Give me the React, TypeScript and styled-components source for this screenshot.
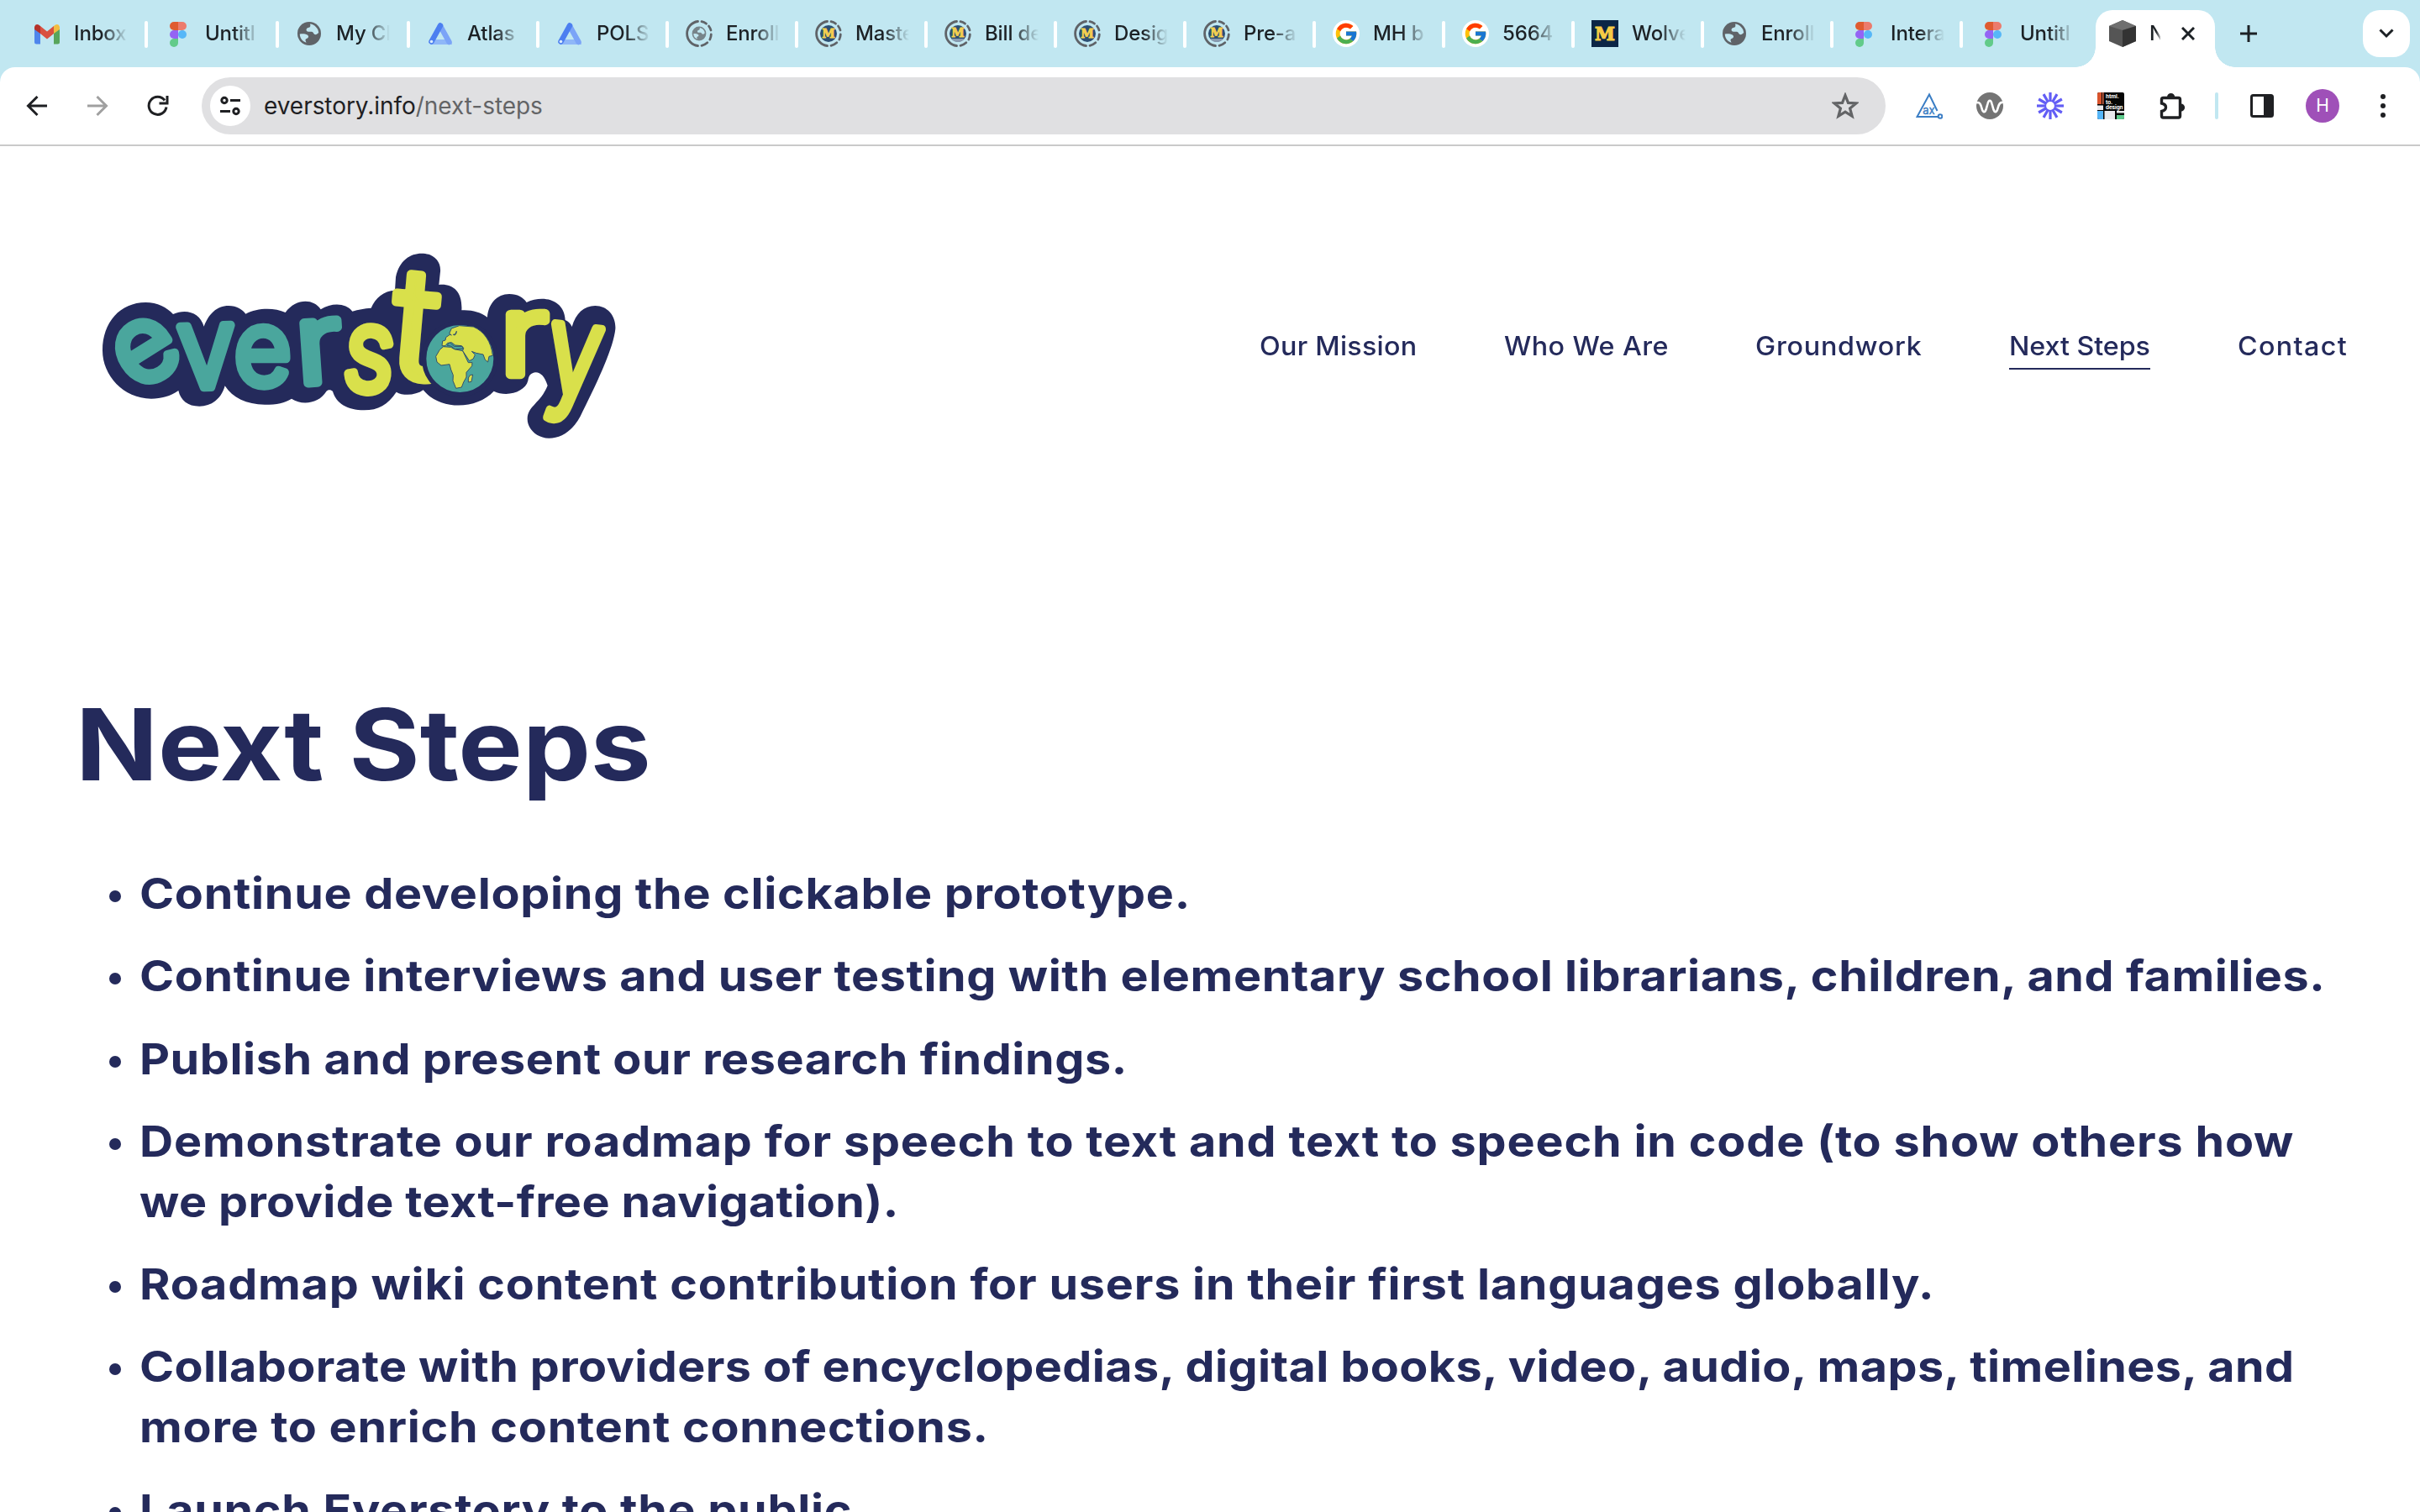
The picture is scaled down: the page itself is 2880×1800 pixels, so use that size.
import React from "react";
import styled, { createGlobalStyle } from "styled-components";
import { FcGoogle } from "react-icons/fc";

const NAVY = "#242a5b";
const TEAL = "#4aa69d";
const LIME = "#d9e04b";

const Global = createGlobalStyle`
  * { box-sizing: border-box; }
  html, body { margin: 0; background: #fff; }
  body { width: 2880px; height: 1800px; overflow: hidden; font-family: Inter, "Liberation Sans", sans-serif; }
`;

const Window = styled.div`
  width: 2880px;
  height: 1800px;
  overflow: hidden;
  display: flex;
  flex-direction: column;
  background: #fff;
`;

/* ---------- tab strip ---------- */

const TabStrip = styled.div`
  height: 80px;
  flex: none;
  display: flex;
  padding-left: 18px;
  background: #c1e7f1;
`;

const Tab = styled.div<{ $w: number; $last?: boolean }>`
  width: ${(p) => p.$w}px;
  height: 80px;
  flex: none;
  display: flex;
  align-items: center;
  padding: 0 0 0 22px;
  position: relative;
  &::after {
    content: "";
    position: absolute;
    right: -2px;
    top: 25px;
    width: 4px;
    height: 32px;
    border-radius: 2px;
    background: ${(p) => (p.$last ? "transparent" : "#fff")};
  }
`;

const Favicon = styled.span`
  width: 32px;
  height: 32px;
  flex: none;
  display: block;
  svg { display: block; }
`;

const TabTitle = styled.span<{ $w: number }>`
  width: ${(p) => p.$w}px;
  margin-left: 16px;
  overflow: hidden;
  white-space: nowrap;
  font-size: 24px;
  line-height: 32px;
  font-weight: 500;
  letter-spacing: -0.15px;
  color: #1c2125;
  mask-image: linear-gradient(to right, #000 calc(100% - 30px), transparent);
`;

const ActiveTab = styled.div`
  width: 142px;
  height: 68px;
  margin: 12px 0 0 6px;
  flex: none;
  display: flex;
  align-items: center;
  padding: 0 0 12px 16px;
  border-radius: 20px 20px 0 0;
  background: #fff;
  position: relative;
  &::before, &::after {
    content: "";
    position: absolute;
    bottom: 0;
    width: 24px;
    height: 24px;
  }
  &::before { right: 100%; background: radial-gradient(circle at 0 0, transparent 23.5px, #fff 24px); }
  &::after { left: 100%; background: radial-gradient(circle at 100% 0, transparent 23.5px, #fff 24px); }
`;

const ActiveTitle = styled.span`
  width: 13px;
  margin: 0 25px 0 16px;
  overflow: hidden;
  font-size: 24px;
  line-height: 32px;
  font-weight: 500;
  color: #1c2125;
  mask-image: linear-gradient(to right, #000 60%, rgba(0, 0, 0, 0.3));
`;

const NewTab = styled.div`
  width: 32px;
  margin-left: 24px;
  height: 80px;
  display: flex;
  align-items: center;
  justify-content: center;
`;

const TabSearch = styled.div`
  width: 56px;
  height: 56px;
  margin: 12px 12px 0 auto;
  border-radius: 20px;
  background: #fff;
  display: flex;
  align-items: center;
  justify-content: center;
`;

/* ---------- toolbar ---------- */

const ToolbarBack = styled.div`
  flex: none;
  background: linear-gradient(#c1e7f1 50%, #fff 50%);
`;

const Toolbar = styled.div`
  height: 94px;
  padding: 12px 0 12px 28px;
  display: flex;
  align-items: flex-start;
  background: #fff;
  border-radius: 18px 18px 0 0;
  border-bottom: 2px solid #cacaca;
`;

const NavIcons = styled.div`
  width: 212px;
  height: 68px;
  display: flex;
  align-items: center;
  gap: 40px;
  svg { display: block; flex: none; }
`;

const Omnibox = styled.div`
  width: 2004px;
  height: 68px;
  flex: none;
  padding: 0 32px 0 10px;
  display: flex;
  align-items: center;
  border-radius: 34px;
  background: #e0e0e2;
`;

const SiteInfo = styled.span`
  width: 48px;
  height: 48px;
  border-radius: 50%;
  background: #fff;
  display: flex;
  align-items: center;
  justify-content: center;
`;

const Url = styled.span`
  flex: 1;
  margin-left: 16px;
  font-size: 28px;
  line-height: 40px;
  letter-spacing: -0.05px;
  color: #1f2023;
  span { color: #636466; }
`;

const Extensions = styled.div`
  height: 68px;
  margin-left: 36px;
  display: flex;
  align-items: center;
  gap: 40px;
  svg { display: block; flex: none; }
`;

const PuzzleSlot = styled.span`
  margin: 0 -2px;
`;

const Divider = styled.span`
  width: 4px;
  height: 32px;
  border-radius: 2px;
  margin: 0 -4px;
  background: #c1e7f1;
`;

const Avatar = styled.span`
  width: 40px;
  height: 40px;
  margin: 0 -4px;
  border-radius: 50%;
  background: #9f50b8;
  color: #fff;
  font-size: 21px;
  line-height: 40px;
  text-align: center;
`;

/* ---------- page ---------- */

const SiteHeader = styled.header`
  height: 476px;
  flex: none;
  display: flex;
  justify-content: space-between;
  padding: 106px 86px 0 100px;
`;

const SiteNav = styled.nav`
  display: flex;
  align-items: flex-start;
  gap: 104px;
  padding-top: 109px;
`;

const NavLink = styled.a<{ $w: number; $ls: number; $active?: boolean }>`
  width: ${(p) => p.$w}px;
  height: 51px;
  font-size: 31px;
  line-height: 46px;
  font-weight: 500;
  letter-spacing: ${(p) => p.$ls}px;
  white-space: nowrap;
  color: ${NAVY};
  border-bottom: 2px solid ${(p) => (p.$active ? NAVY : "transparent")};
`;

const NavLabel = styled.span`
  display: inline-block;
  transform: scaleX(1.04);
  transform-origin: 0 0;
`;

const Main = styled.main`
  padding: 165px 90px 0;
`;

const Title = styled.h1`
  width: max-content;
  margin: 0;
  font-size: 118px;
  line-height: 142px;
  font-weight: 700;
  letter-spacing: -0.1px;
  color: ${NAVY};
  transform: scaleX(1.09);
  transform-origin: 0 0;
`;

const Steps = styled.ul`
  margin: 70px 0 0;
  padding: 0;
  list-style: none;
  display: flex;
  flex-direction: column;
  gap: 26.3px;
`;

const Step = styled.li`
  display: grid;
  grid-template-columns: 76px 1fr;
  color: ${NAVY};
  &::before {
    content: "";
    width: 14px;
    height: 14px;
    margin: 33px 0 0 40px;
    border-radius: 50%;
    background: ${NAVY};
  }
`;

const StepText = styled.div`
  display: flex;
  flex-direction: column;
  align-items: flex-start;
`;

const Line = styled.span<{ $ls: number }>`
  font-size: 51.5px;
  line-height: 72px;
  font-weight: 700;
  white-space: nowrap;
  letter-spacing: ${(p) => p.$ls}px;
  transform: scaleX(1.08);
  transform-origin: 0 0;
`;

/* ---------- favicons ---------- */

const Gmail = () => (
  <svg width="32" height="32" viewBox="0 0 32 32">
    <path d="M1 8v18q0 2.500 2.500 2.500H8V14z" fill="#4f86ec" />
    <path d="M31 8v18q0 2.500-2.500 2.500H24V14z" fill="#58a55c" />
    <path d="M24 7v9l7-5V8q-1-4-5-2.500z" fill="#f2bd42" />
    <path d="M8 7v9l-7-5V8q1-4 5-2.500z" fill="#b5322a" />
    <path d="M8 7l8 6.500L24 7v9l-8 6.500L8 16z" fill="#d95040" />
  </svg>
);

const Figma = () => (
  <svg width="32" height="32" viewBox="0 0 32 32">
    <path d="M16 2h-5a5 5 0 0 0 0 10h5z" fill="#df5b30" />
    <path d="M16 2h5a5 5 0 0 1 0 10h-5z" fill="#ec7b6c" />
    <path d="M16 12h-5a5 5 0 0 0 0 10h5z" fill="#9464f4" />
    <circle cx="21" cy="17" r="5" fill="#56b7f8" />
    <path d="M16 22h-5a5 5 0 1 0 5 5z" fill="#62cb8a" />
  </svg>
);

const GlobeShape = () => (
  <>
    <circle cx="16" cy="16" r="14" fill="#5f6368" />
    <path d="M17 4.500C22 5 27 9.500 27.200 15c-1.500 1.500-3 2.500-4.700 2-1.500-.5-1.500-3-3.500-3.200-2.500-.2-5 .7-6.200-1.300-.8-1.600.7-3.500 2.700-3.700C17 8.600 18 7 17 4.500z" fill="#c1e7f1" />
    <path d="M4.800 16.500c3-.5 6.500-.5 9 1 1.700 1 1.700 3 .2 4-1 .6-2.500.5-2.500 2 0 1.200.5 2 1 3.200C8 25.500 4.800 21.500 4.800 16.500z" fill="#c1e7f1" />
  </>
);

const Globe = () => (
  <svg width="32" height="32" viewBox="0 0 32 32"><GlobeShape /></svg>
);

const Atlas = () => (
  <svg width="32" height="32" viewBox="0 0 32 32">
    <path d="M5 25L16 5l11 20z" fill="#c1e7f1" />
    <path d="M3 23h25l2 6H4z" fill="#8fb7f8" />
    <path d="M16 7l10.500 19" stroke="#7ba4f7" strokeWidth="6.500" strokeLinecap="round" />
    <path d="M16 6.500L5.500 25.500" stroke="#4c7ff0" strokeWidth="6.500" strokeLinecap="round" />
    <circle cx="5.500" cy="25.500" r="1.800" fill="#dcecfd" />
  </svg>
);

const Ring = () => (
  <g fill="none" stroke="#5f6368" strokeWidth="2.800" strokeLinecap="round">
    <path d="M14.500 1.500A14.600 14.600 0 0 0 14.500 30.500" />
    <path d="M19 1.700A14.600 14.600 0 0 1 24.500 4.200" />
    <path d="M27.500 7A14.600 14.600 0 0 1 30 12" />
    <path d="M30.300 17A14.600 14.600 0 0 1 28.800 23" />
    <path d="M25.800 26.800A14.600 14.600 0 0 1 19 30.300" />
  </g>
);

const RingGlobe = () => (
  <svg width="32" height="32" viewBox="0 0 32 32">
    <Ring />
    <g transform="translate(6.400 6.400) scale(0.600)" opacity="0.750"><GlobeShape /></g>
  </svg>
);

const RingM = ({ building }: { building?: boolean }) => (
  <svg width="32" height="32" viewBox="0 0 32 32">
    <Ring />
    <circle cx="16" cy="16" r="10" fill="#2c4f73" />
    {building && <path d="M8 22h16a10 10 0 0 1-16 0z" fill="#8a9bb0" />}
    <text x="16" y={building ? 19.500 : 21} textAnchor="middle" fontFamily="DejaVu Serif, serif" fontWeight="700" fontSize="14" fill="#f3cf4f" stroke="#f3cf4f" strokeWidth="0.900">M</text>
  </svg>
);

const Google = () => (
  <svg width="32" height="32" viewBox="0 0 32 32">
    <circle cx="16" cy="16" r="16" fill="#fff" />
    <FcGoogle x={1.25} y={1.25} size={29.5} />
  </svg>
);

const Michigan = () => (
  <svg width="32" height="32" viewBox="0 0 32 32">
    <rect width="32" height="32" fill="#0c2646" />
    <text x="16" y="24" textAnchor="middle" fontFamily="DejaVu Serif, serif" fontWeight="700" fontSize="21.500" fill="#f6cb45" stroke="#f6cb45" strokeWidth="1.200">M</text>
  </svg>
);

const Cube = () => (
  <svg width="32" height="32" viewBox="0 0 32 32">
    <path d="M16 0l16 7v18l-16 7-16-7V7z" fill="#555" />
    <path d="M16 0l16 7-16 5L0 7z" fill="#6f6f6f" />
    <path d="M16 12l16-5v18l-16 7z" fill="#333" />
  </svg>
);

const TABS: { icon: React.ReactNode; title: string; w: number }[] = [
  { icon: <Gmail />, title: "Inbox", w: 156 },
  { icon: <Figma />, title: "Untitl", w: 156 },
  { icon: <Globe />, title: "My Cl", w: 156 },
  { icon: <Atlas />, title: "Atlas", w: 154 },
  { icon: <Atlas />, title: "POLS", w: 154 },
  { icon: <RingGlobe />, title: "Enroll", w: 154 },
  { icon: <RingM />, title: "Maste", w: 154 },
  { icon: <RingM building />, title: "Bill de", w: 154 },
  { icon: <RingM />, title: "Desig", w: 154 },
  { icon: <RingM building />, title: "Pre-a", w: 154 },
  { icon: <Google />, title: "MH b", w: 154 },
  { icon: <Google />, title: "5664", w: 154 },
  { icon: <Michigan />, title: "Wolve", w: 154 },
  { icon: <Globe />, title: "Enroll", w: 154 },
  { icon: <Figma />, title: "Intera", w: 154 },
  { icon: <Figma />, title: "Untitl", w: 154 },
];

/* ---------- toolbar icons ---------- */

const Arrow = ({ flip, color }: { flip?: boolean; color: string }) => (
  <svg width="32" height="32" viewBox="0 0 32 32" fill="none" stroke={color} strokeWidth="3">
    <g transform={flip ? "matrix(-1 0 0 1 32 0)" : undefined}>
      <path d="M28 16H6M16.500 5L5.500 16l11 11" />
    </g>
  </svg>
);

const Reload = () => (
  <svg width="32" height="32" viewBox="0 0 32 32" fill="none" stroke="#1f2023" strokeWidth="3">
    <path d="M26 17.500A10.500 10.500 0 1 1 24 9.500" />
    <path d="M27 4v9h-9.500" />
  </svg>
);

const Tune = () => (
  <svg width="28" height="28" viewBox="0 0 28 28" fill="none" stroke="#1f2023" strokeWidth="3">
    <circle cx="7" cy="7.500" r="3.200" />
    <path d="M14 7.500h12" />
    <circle cx="21" cy="20.500" r="3.200" />
    <path d="M2 20.500h12" />
  </svg>
);

const Star = () => (
  <svg width="32" height="32" viewBox="0 0 32 32" fill="none" stroke="#636466" strokeWidth="3.200">
    <path d="M16 3.500l3.500 8.900 9.400.6-7.300 6 2.500 9.300L16 23.200l-8.100 5.100 2.500-9.300-7.300-6 9.400-.6z" />
  </svg>
);

const Axe = () => (
  <svg width="32" height="32" viewBox="0 0 32 32" fill="none" stroke="#3a7dc4" strokeWidth="2">
    <path d="M25.500 22L16 2.500 1.500 29H26" />
    <circle cx="29" cy="28.500" r="2.300" />
    <text x="15.500" y="25.500" textAnchor="middle" fontFamily="Inter, sans-serif" fontSize="13" fill="#3a7dc4" strokeWidth="0.400">ax</text>
  </svg>
);

const Wave = () => (
  <svg width="32" height="32" viewBox="0 0 32 32">
    <circle cx="16" cy="16" r="16" fill="#747474" />
    <path d="M0 12.500C4 10.500 5.500 15 6.500 19c1.200 5 3.500 5.500 5 1.500L13.500 13.500c1.200-5 3.800-5 5 0l2 7c1.500 4 3.800 3.500 5-1.500 1-4 2.500-8 6.500-7" fill="none" stroke="#fff" strokeWidth="2.600" />
  </svg>
);

const Burst = () => (
  <svg width="32" height="32" viewBox="-16 -16 32 32" stroke="#625df5" strokeWidth="3.200">
    {Array.from({ length: 12 }, (_, i) => (
      <path key={i} d="M0-6V-16" transform={`rotate(${i * 30})`} />
    ))}
    <circle r="5.800" fill="none" strokeWidth="1.800" />
  </svg>
);

const HtmlToDesign = () => (
  <svg width="32" height="32" viewBox="0 0 32 32">
    <rect width="32" height="32" rx="2" fill="#050505" />
    <path d="M2 0h3v14H0V2q0-2 2-2z" fill="#d9532c" />
    <path d="M6 0h1.500v14H6z" fill="#df6a48" />
    <path d="M0 15.500h7v5.500H0zM8.500 22H21v10H8.500zM23 22h9v2.500h-9z" fill="#e9e9ec" />
    <path d="M0 22h7v10H2q-2 0-2-2z" fill="#55b5f7" />
    <path d="M23 27h9v3q0 2-2 2h-7z" fill="#5dca8b" />
    <g fill="#fff" fontFamily="Inter, sans-serif" fontWeight="700" fontSize="6.300">
      <text x="10" y="7">html.</text>
      <text x="10" y="13.500">to.</text>
      <text x="10" y="20" textLength="20.500">design</text>
    </g>
  </svg>
);

const Puzzle = () => (
  <svg width="36" height="36" viewBox="0 0 36 36">
    <path d="M8.500 8.500h18q2 0 2 2V30q0 2-2 2H8.500q-2 0-2-2v-5.500c4-1 5-3 5-4.800s-1-3.800-5-4.700v-4.500q0-2 2-2z" fill="none" stroke="#1f2023" strokeWidth="3.400" />
    <path d="M13 7.500a4.600 4.600 0 0 1 9.200 0z M29.500 15.500a4.600 4.600 0 0 1 0 9.200z" fill="#1f2023" />
  </svg>
);

const SidePanel = () => (
  <svg width="32" height="32" viewBox="0 0 32 32">
    <rect x="3.500" y="3.500" width="25" height="25" rx="2" fill="none" stroke="#1f2023" strokeWidth="3" />
    <path d="M18 3h10v26H18z" fill="#1f2023" />
  </svg>
);

const Dots = () => (
  <svg width="32" height="32" viewBox="0 0 32 32" fill="#1f2023">
    <circle cx="16" cy="5" r="3" /><circle cx="16" cy="16" r="3" /><circle cx="16" cy="27" r="3" />
  </svg>
);

/* ---------- logo ---------- */

const LETTERS = [
  { ch: "e", x: 221, y: 415, size: 375, rot: -32, sx: 1, fill: TEAL },
  { ch: "v", x: 437, y: 433, size: 400, rot: -2, sx: 0.930, fill: TEAL },
  { ch: "e", x: 638, y: 434, size: 370, rot: 0, sx: 0.950, fill: TEAL },
  { ch: "r", x: 838, y: 418, size: 395, rot: -4, sx: 1.150, fill: TEAL },
  { ch: "s", x: 1018, y: 443, size: 410, rot: 6, sx: 0.850, fill: LIME },
  { ch: "t", x: 1186, y: 320, size: 545, rot: 5, sx: 1.020, fill: LIME },
  { ch: "r", x: 1570, y: 390, size: 395, rot: 0, sx: 1.200, fill: LIME },
  { ch: "y", x: 1745, y: 494, size: 450, rot: 7, sx: 0.780, fill: LIME },
];

const CENTER: Record<string, number> = { t: 0.35, y: 0.17 };

const Logo = () => (
  <svg width="660" height="260" viewBox="0 0 1980 780" role="img" aria-label="everstory">
    <path
      fill={NAVY}
      d="M66 412C66 310 130 240 220 240C262 240 296 258 318 282C366 260 415 278 428 326C445 280 475 252 516 252C546 252 566 266 577 281C620 258 680 258 719 276C755 225 820 225 845 265C885 240 935 242 958 272C980 265 1000 262 1025 260C1040 225 1070 198 1110 197L1113 150C1125 90 1165 65 1205 65C1250 65 1275 95 1272 130L1267 177C1320 172 1352 205 1348 268C1385 266 1415 275 1440 293C1443 245 1475 210 1518 210C1548 210 1568 222 1580 240C1640 212 1715 230 1718 303C1728 307 1737 315 1742 327C1755 280 1785 252 1825 252C1870 252 1900 290 1897 335C1890 400 1840 510 1780 630C1755 690 1710 725 1660 725C1615 725 1582 690 1583 655C1584 610 1630 600 1655 537C1645 505 1630 490 1613 490C1595 492 1588 500 1585 520C1575 560 1510 580 1463 557C1400 625 1270 625 1211 553C1185 572 1140 575 1115 560C1085 605 1050 625 1000 625C940 625 900 600 888 558C882 551 870 551 865 558C840 600 780 610 741 584C715 600 690 605 645 605C580 605 530 580 503 538C490 585 455 611 412 611C370 611 345 590 337 555C310 575 275 584 240 584C140 584 66 500 66 412Z"
    />
    {LETTERS.map((l, i) => (
      <text
        key={i}
        transform={`translate(${l.x} ${l.y}) rotate(${l.rot}) scale(${l.sx} 1)`}
        y={l.size * (CENTER[l.ch] ?? 0.273)}
        textAnchor="middle"
        fontFamily="Inter, sans-serif"
        fontWeight="300"
        fontSize={l.size}
        fill={l.fill}
        stroke={l.fill}
        strokeWidth="32"
        strokeLinejoin="round"
        strokeLinecap="round"
      >
        {l.ch}
      </text>
    ))}
    <circle cx="1342" cy="441" r="128" fill={TEAL} stroke={NAVY} strokeWidth="16" />
    <g transform="translate(1200 285)" fill={LIME} stroke="#35516a" strokeWidth="3" strokeLinejoin="round">
      <path d="M83 113L70 124L56 148L60 168L75 180L105 176L110 195L118 215L117 235L128 262L148 258L155 240L165 222L165 205L185 182L186 170L172 170L152 128L122 122L110 115Z" />
      <path d="M78 110L80 93L90 90L92 80L106 70L112 72L104 66L112 48L140 38L190 42C228 58 254 95 259 145L246 148L242 168L232 160L225 141L200 136L184 130L196 142L190 156L176 164L152 128L155 118L148 110L125 108L112 98L98 100L90 110Z" />
      <path d="M178 215L188 213L183 238L172 240L172 225Z" />
      <path d="M96 108L106 99L122 112L150 112L154 120L124 122L112 112Z" fill={TEAL} />
      <path d="M118 70L128 68L130 58L124 72Z" fill={TEAL} />
    </g>
  </svg>
);

const NAV = [
  { label: "Our Mission", w: 187, ls: 0.25 },
  { label: "Who We Are", w: 195, ls: 0.4 },
  { label: "Groundwork", w: 198, ls: 0.75 },
  { label: "Next Steps", w: 168, ls: -0.05, active: true },
  { label: "Contact", w: 131, ls: 1.3 },
];

const STEPS: { text: string; ls: number }[][] = [
  [{ text: "Continue developing the clickable prototype.", ls: 0.65 }],
  [{ text: "Continue interviews and user testing with elementary school librarians, children, and families.", ls: 0.55 }],
  [{ text: "Publish and present our research findings.", ls: 0.53 }],
  [
    { text: "Demonstrate our roadmap for speech to text and text to speech in code (to show others how", ls: 0.77 },
    { text: "we provide text-free navigation).", ls: 0.36 },
  ],
  [{ text: "Roadmap wiki content contribution for users in their first languages globally.", ls: 0.73 }],
  [
    { text: "Collaborate with providers of encyclopedias, digital books, video, audio, maps, timelines, and", ls: 0.38 },
    { text: "more to enrich content connections.", ls: 0.7 },
  ],
  [{ text: "Launch Everstory to the public.", ls: 0.66 }],
];

export default function App() {
  return (
    <Window>
      <Global />
      <TabStrip>
        {TABS.map((t, i) => (
          <Tab key={i} $w={t.w} $last={i === TABS.length - 1}>
            <Favicon>{t.icon}</Favicon>
            <TabTitle $w={64}>{t.title}</TabTitle>
          </Tab>
        ))}
        <ActiveTab>
          <Favicon><Cube /></Favicon>
          <ActiveTitle>N</ActiveTitle>
          <svg width="16" height="16" viewBox="0 0 16 16" stroke="#1c2125" strokeWidth="3"><path d="M1 1l14 14M15 1L1 15" /></svg>
        </ActiveTab>
        <NewTab>
          <svg width="20" height="20" viewBox="0 0 20 20" stroke="#1c2125" strokeWidth="3"><path d="M10 0v20M0 10h20" /></svg>
        </NewTab>
        <TabSearch>
          <svg width="18" height="12" viewBox="0 0 18 12" fill="none" stroke="#1c2125" strokeWidth="3"><path d="M1.500 1.500L9 9l7.500-7.500" /></svg>
        </TabSearch>
      </TabStrip>
      <ToolbarBack>
        <Toolbar>
          <NavIcons>
            <Arrow color="#1f2023" />
            <Arrow flip color="#a0a0a0" />
            <Reload />
          </NavIcons>
          <Omnibox>
            <SiteInfo><Tune /></SiteInfo>
            <Url>everstory.info<span>/next-steps</span></Url>
            <Star />
          </Omnibox>
          <Extensions>
            <Axe />
            <Wave />
            <Burst />
            <HtmlToDesign />
            <PuzzleSlot><Puzzle /></PuzzleSlot>
            <Divider />
            <SidePanel />
            <Avatar>H</Avatar>
            <Dots />
          </Extensions>
        </Toolbar>
      </ToolbarBack>
      <SiteHeader>
        <Logo />
        <SiteNav>
          {NAV.map((n) => (
            <NavLink key={n.label} $w={n.w} $ls={n.ls} $active={n.active}>
              <NavLabel>{n.label}</NavLabel>
            </NavLink>
          ))}
        </SiteNav>
      </SiteHeader>
      <Main>
        <Title>Next Steps</Title>
        <Steps>
          {STEPS.map((lines, i) => (
            <Step key={i}>
              <StepText>
                {lines.map((l) => <Line key={l.text} $ls={l.ls}>{l.text}</Line>)}
              </StepText>
            </Step>
          ))}
        </Steps>
      </Main>
    </Window>
  );
}
